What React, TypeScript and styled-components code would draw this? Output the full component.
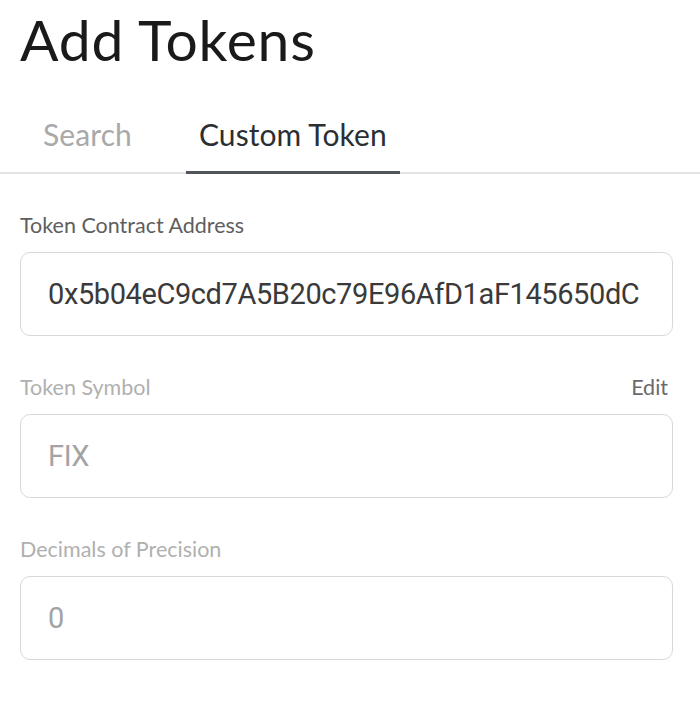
import React from "react";
import styled, { createGlobalStyle } from "styled-components";

const Global = createGlobalStyle`
  html, body { margin: 0; padding: 0; background: #ffffff; }
  body { font-family: "Lato", "Liberation Sans", sans-serif; color: #1c1c1c; }
`;

const Page = styled.div`
  width: 700px;
  height: 723px;
  background: #fff;
  overflow: hidden;
`;

const Title = styled.h1`
  margin: 0;
  padding: 5px 0 0 20px;
  font-family: "Lato", sans-serif;
  font-weight: 400;
  font-size: 57px;
  line-height: 68px;
  color: #1a1a1a;
  letter-spacing: 0.8px;
`;

const Tabs = styled.div`
  display: flex;
  gap: 41px;
  margin-top: 44px;
  padding-left: 30px;
  border-bottom: 2px solid #e3e3e3;
`;

const Tab = styled.div<{ $active?: boolean }>`
  padding: 0 13px 20px;
  margin-bottom: -2px;
  font-family: "Lato", sans-serif;
  font-size: 30px;
  line-height: 34px;
  letter-spacing: 0.1px;
  color: ${(p) => (p.$active ? "#2b2f33" : "#a9a9a9")};
  border-bottom: 3px solid ${(p) => (p.$active ? "#50565c" : "transparent")};
`;

const Form = styled.div`
  display: flex;
  flex-direction: column;
  padding: 39px 27px 0 20px;
`;

const Field = styled.div`
  display: flex;
  flex-direction: column;
  gap: 15px;
  margin-bottom: 39px;
`;

const LabelRow = styled.div`
  display: flex;
  justify-content: space-between;
  align-items: baseline;
  padding-right: 5px;
`;

const Label = styled.span<{ $muted?: boolean }>`
  font-family: "Lato", sans-serif;
  font-size: 21.5px;
  line-height: 24px;
  color: ${(p) => (p.$muted ? "#b0b0b0" : "#5e5e5e")};
`;

const EditLink = styled.span`
  font-family: "Lato", sans-serif;
  font-size: 21.5px;
  line-height: 24px;
  color: #6a6a6a;
`;

const InputBox = styled.div<{ $muted?: boolean }>`
  box-sizing: border-box;
  height: 84px;
  border: 1.5px solid #d8d8d8;
  border-radius: 10px;
  display: flex;
  align-items: center;
  padding: 0 27px;
  font-family: "Roboto", sans-serif;
  font-size: 29px;
  letter-spacing: -0.4px;
  color: ${(p) => (p.$muted ? "#a3a3a3" : "#3a3a3a")};
`;

export default function App() {
  return (
    <Page>
      <Global />
      <Title>Add Tokens</Title>
      <Tabs>
        <Tab>Search</Tab>
        <Tab $active>Custom Token</Tab>
      </Tabs>
      <Form>
        <Field>
          <LabelRow>
            <Label>Token Contract Address</Label>
          </LabelRow>
          <InputBox>0x5b04eC9cd7A5B20c79E96AfD1aF145650dC</InputBox>
        </Field>
        <Field>
          <LabelRow>
            <Label $muted>Token Symbol</Label>
            <EditLink>Edit</EditLink>
          </LabelRow>
          <InputBox $muted>FIX</InputBox>
        </Field>
        <Field>
          <LabelRow>
            <Label $muted>Decimals of Precision</Label>
          </LabelRow>
          <InputBox $muted>0</InputBox>
        </Field>
      </Form>
    </Page>
  );
}
